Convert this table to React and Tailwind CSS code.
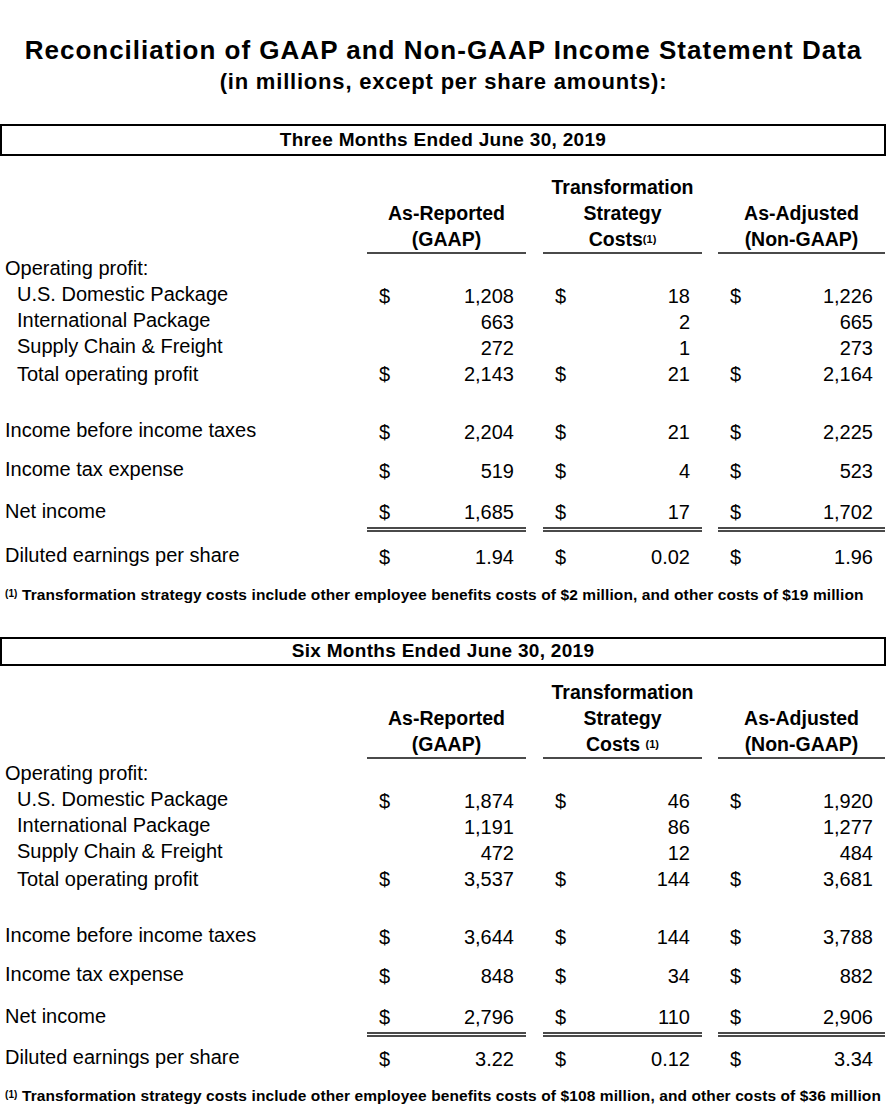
import React from "react";

const COLS = [
  { w: "w-[159px]", ml: "ml-0" },
  { w: "w-[159px]", ml: "ml-[17px]" },
  { w: "w-[167px]", ml: "ml-[16px]" },
];

function Cell({ i, dollar, num, top, dbl }) {
  const c = COLS[i];
  return (
    <div className={`${c.w} ${c.ml} flex flex-col h-full`}>
      {top ? <div className="h-[2px] bg-[#4a4a4a]" /> : null}
      <div className="flex-1 flex items-center justify-between pl-[12px] pr-[12px]">
        <span>{dollar ? "$" : ""}</span>
        <span>{num}</span>
      </div>
      {dbl ? (
        <div className="flex flex-col">
          <div className="h-[2px] bg-[#4a4a4a]" />
          <div className="h-[1px]" />
          <div className="h-[2px] bg-[#4a4a4a]" />
        </div>
      ) : null}
    </div>
  );
}

function Row({ label, indent, vals, h = "h-[26px]", mt = "", top, dbl }) {
  return (
    <div className={`flex ${h} ${mt}`}>
      <div
        className={`w-[367px] flex items-center ${indent ? "pl-[17px]" : "pl-[5px]"} ${top ? "pt-[2px]" : ""} ${
          dbl ? "pb-[5px]" : ""
        }`}
      >
        {label}
      </div>
      {vals
        ? vals.map((v, i) => (
            <Cell key={i} i={i} dollar={v[0]} num={v[1]} top={top} dbl={dbl} />
          ))
        : null}
    </div>
  );
}

function Section({ title, boxH, headMt, epsMt, footMt, costsSpace, d }) {
  return (
    <div className="flex flex-col">
      <div
        className={`${boxH} w-[886px] border-2 border-black flex items-center justify-center font-bold text-[19px] tracking-[0.3px]`}
      >
        {title}
      </div>
      <div className={`flex ${headMt} font-bold text-[19.5px] leading-[26px] text-center`}>
        <div className="w-[367px]" />
        <div className="w-[159px] flex flex-col justify-end border-b-2 border-[#4a4a4a]">
          <div>As-Reported</div>
          <div>(GAAP)</div>
        </div>
        <div className="w-[159px] ml-[17px] flex flex-col justify-end border-b-2 border-[#4a4a4a]">
          <div>Transformation</div>
          <div>Strategy</div>
          <div>
            Costs{costsSpace ? " " : ""}
            <sup className="text-[11px] relative -top-[3px]">(1)</sup>
          </div>
        </div>
        <div className="w-[167px] ml-[16px] flex flex-col justify-end border-b-2 border-[#4a4a4a]">
          <div>As-Adjusted</div>
          <div>(Non-GAAP)</div>
        </div>
      </div>
      <div className="text-[20px]">
        <Row label="Operating profit:" h="h-[27px]" />
        <Row label="U.S. Domestic Package" indent vals={[[1, d.us[0]], [1, d.us[1]], [1, d.us[2]]]} />
        <Row label="International Package" indent vals={[[0, d.intl[0]], [0, d.intl[1]], [0, d.intl[2]]]} />
        <Row label="Supply Chain & Freight" indent vals={[[0, d.sc[0]], [0, d.sc[1]], [0, d.sc[2]]]} />
        <Row label="Total operating profit" indent top h="h-[27px]" vals={[[1, d.tot[0]], [1, d.tot[1]], [1, d.tot[2]]]} />
        <Row label="Income before income taxes" mt="mt-[31px]" vals={[[1, d.ibt[0]], [1, d.ibt[1]], [1, d.ibt[2]]]} />
        <Row label="Income tax expense" mt="mt-[13px]" vals={[[1, d.tax[0]], [1, d.tax[1]], [1, d.tax[2]]]} />
        <Row label="Net income" mt="mt-[15px]" h="h-[30px]" top dbl vals={[[1, d.ni[0]], [1, d.ni[1]], [1, d.ni[2]]]} />
        <Row label="Diluted earnings per share" mt={epsMt} vals={[[1, d.eps[0]], [1, d.eps[1]], [1, d.eps[2]]]} />
      </div>
      <div className={`${footMt} pl-[5px] font-bold text-[15.5px] tracking-[0.1px] leading-[20px] whitespace-nowrap`}>
        <sup className="text-[10px] relative -top-[3px]">(1)</sup> {d.foot}
      </div>
    </div>
  );
}

export default function App() {
  const s1 = {
    us: ["1,208", "18", "1,226"],
    intl: ["663", "2", "665"],
    sc: ["272", "1", "273"],
    tot: ["2,143", "21", "2,164"],
    ibt: ["2,204", "21", "2,225"],
    tax: ["519", "4", "523"],
    ni: ["1,685", "17", "1,702"],
    eps: ["1.94", "0.02", "1.96"],
    foot:
      "Transformation strategy costs include other employee benefits costs of $2 million, and other costs of $19 million",
  };
  const s2 = {
    us: ["1,874", "46", "1,920"],
    intl: ["1,191", "86", "1,277"],
    sc: ["472", "12", "484"],
    tot: ["3,537", "144", "3,681"],
    ibt: ["3,644", "144", "3,788"],
    tax: ["848", "34", "882"],
    ni: ["2,796", "110", "2,906"],
    eps: ["3.22", "0.12", "3.34"],
    foot:
      "Transformation strategy costs include other employee benefits costs of $108 million, and other costs of $36 million",
  };
  return (
    <div
      className="w-[887px] h-[1111px] bg-white text-black overflow-hidden"
      style={{ fontFamily: '"Liberation Sans", Arial, sans-serif' }}
    >
      <div className="pt-[36px] flex flex-col items-center font-bold">
        <div className="text-[26px] leading-[28px] tracking-[1px]">
          Reconciliation of GAAP and Non-GAAP Income Statement Data
        </div>
        <div className="text-[22px] leading-[28px] mt-[4px] tracking-[0.8px]">
          (in millions, except per share amounts):
        </div>
      </div>
      <div className="mt-[28px]">
        <Section
          title="Three Months Ended June 30, 2019"
          boxH="h-[32px]"
          headMt="mt-[18px]"
          epsMt="mt-[15px]"
          footMt="mt-[17px]"
          d={s1}
        />
      </div>
      <div className="mt-[32px]">
        <Section
          title="Six Months Ended June 30, 2019"
          boxH="h-[29px]"
          headMt="mt-[13px]"
          epsMt="mt-[12px]"
          footMt="mt-[16px]"
          costsSpace
          d={s2}
        />
      </div>
    </div>
  );
}
